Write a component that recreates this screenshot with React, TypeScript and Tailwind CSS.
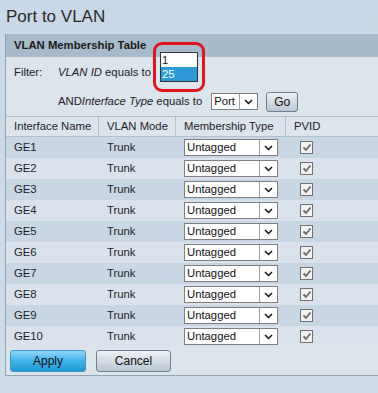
import React from "react";

const rows = ["GE1","GE2","GE3","GE4","GE5","GE6","GE7","GE8","GE9","GE10"];

function Chevron() {
  return (
    <svg width="9" height="6" viewBox="0 0 9 6">
      <polyline points="1,1 4.5,4.5 8,1" fill="none" stroke="#111" strokeWidth="1.5" />
    </svg>
  );
}

function Select({ label, w }: { label: string; w: string }) {
  return (
    <div className={`flex h-[17px] ${w} border border-[#7f7f7f] bg-white`}>
      <div className="flex-1 pl-[2px] leading-[15px] text-[#111]">{label}</div>
      <div className="flex w-[18px] items-center justify-center border-l border-[#a0a0a0] bg-white">
        <Chevron />
      </div>
    </div>
  );
}

function Check() {
  return (
    <div className="flex h-[13px] w-[13px] items-center justify-center border border-[#707070] bg-[#f2f2f2]">
      <svg width="10" height="9" viewBox="0 0 10 9">
        <polyline points="1.5,4.5 4,7 8.5,1.5" fill="none" stroke="#6a6a6a" strokeWidth="1.8" />
      </svg>
    </div>
  );
}

export default function App() {
  return (
    <div
      className="relative h-[393px] w-[378px] overflow-hidden bg-gradient-to-b from-[#c9d8e8] to-[#cfdcea] text-[11.3px] text-[#1c1c28]"
      style={{ fontFamily: '"Liberation Sans", Arial, sans-serif' }}
    >
      <div className="h-[34px] pl-[6px] pt-[7px] text-[17px] leading-[20px] text-[#2a2a2a]">Port to VLAN</div>
      <div className="relative ml-[5px] w-[380px] border-b border-l border-[#93a3b3] bg-[#dce4ec]">
        <div className="flex h-[23px] items-center bg-[#a8bbcc] pl-[8px] font-bold text-[#1a1a1a]">
          VLAN Membership Table
        </div>
        <div className="flex h-[30px] items-center pl-[8px]">
          <span className="w-[44px]">Filter:</span>
          <span className="italic">VLAN ID</span>
          <span>&nbsp;equals to</span>
        </div>
        <div className="flex h-[29px] items-center pl-[52px]">
          <span>AND</span>
          <span className="italic">Interface Type</span>
          <span>&nbsp;equals to</span>
          <div className="ml-[9px]">
            <Select label="Port" w="w-[47px]" />
          </div>
          <button className="ml-[8px] h-[20px] w-[32px] rounded-[3px] border border-[#6f7f8f] bg-gradient-to-b from-[#eef2f6] to-[#b9c6d2] text-[12px] text-[#111]">
            Go
          </button>
        </div>
        <div className="flex h-[21px] items-center border-y border-[#b3c1cf] bg-[#dce4ec]">
          <div className="h-full w-[93px] border-r border-[#b3c1cf] pl-[8px] leading-[19px]">Interface Name</div>
          <div className="h-full w-[77px] border-r border-[#b3c1cf] pl-[8px] leading-[19px]">VLAN Mode</div>
          <div className="h-full w-[110px] border-r border-[#b3c1cf] pl-[8px] leading-[19px]">Membership Type</div>
          <div className="h-full flex-1 pl-[8px] leading-[19px]">PVID</div>
        </div>
        {rows.map((r, i) => (
          <div
            key={r}
            className={`flex h-[21px] items-center ${i % 2 === 0 ? "bg-[#c9d7e5]" : "bg-[#dae3ed]"}`}
          >
            <div className="w-[93px] pl-[8px]">{r}</div>
            <div className="w-[77px] pl-[8px]">Trunk</div>
            <div className="w-[110px] pl-[8px]">
              <Select label="Untagged" w="w-[94px]" />
            </div>
            <div className="flex-1 pl-[14px]">
              <Check />
            </div>
          </div>
        ))}
        <div className="flex gap-[10px] pb-[3px] pl-[4px] pt-[3px]">
          <button className="h-[22px] w-[76px] rounded-[3px] border border-[#3a95c8] bg-gradient-to-b from-[#8fd6f8] via-[#3fb2ea] to-[#1e9ad6] text-[12px] text-[#111]">
            Apply
          </button>
          <button className="h-[22px] w-[75px] rounded-[3px] border border-[#6f7f8f] bg-gradient-to-b from-[#eef2f6] to-[#b9c6d2] text-[12px] text-[#111]">
            Cancel
          </button>
        </div>
        <div className="absolute left-[147px] top-[8px] h-[50px] w-[52px] rounded-[9px] border-[3px] border-[#e3141b]" />
        <div className="absolute left-[154px] top-[18px] w-[38px] border border-[#333] bg-white">
          <div className="h-[14px] pl-[1px] leading-[14px]">1</div>
          <div className="h-[14px] bg-[#2c9ad6] pl-[1px] leading-[14px] text-white">25</div>
        </div>
      </div>
    </div>
  );
}
